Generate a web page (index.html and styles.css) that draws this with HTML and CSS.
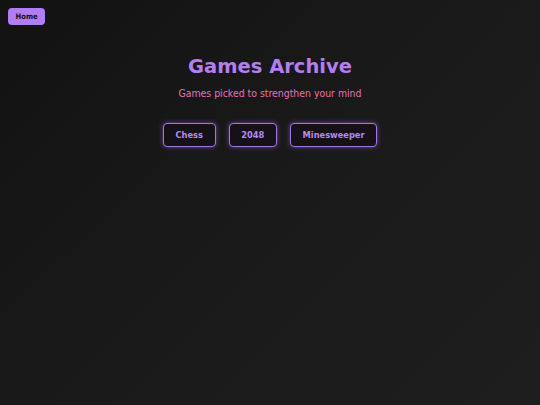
FILE: index.html
```html
<!DOCTYPE html>
<html lang="en">
<head>
<meta charset="utf-8">
<title>Games Archive</title>
<link rel="stylesheet" href="styles.css">
</head>
<body>
  <nav class="topbar">
    <a class="home-btn" href="#">Home</a>
  </nav>
  <main class="hero">
    <h1 class="title">Games Archive</h1>
    <p class="subtitle">Games picked to strengthen your mind</p>
    <div class="games">
      <a class="game-btn" href="#">Chess</a>
      <a class="game-btn" href="#">2048</a>
      <a class="game-btn" href="#">Minesweeper</a>
    </div>
  </main>
</body>
</html>
```

FILE: styles.css
```css
html, body {
  margin: 0;
  padding: 0;
  height: 100%;
}
body {
  background: linear-gradient(135deg, #121212 0%, #1a1a1a 50%, #1e1e1e 100%);
  font-family: "DejaVu Sans", Verdana, sans-serif;
  color: #ddd;
}
.topbar {
  padding: 8px 0 0 8px;
  display: flex;
}
.home-btn {
  display: inline-block;
  background: #b07ef2;
  color: #1a1022;
  font-family: "DejaVu Sans Condensed", "DejaVu Sans", sans-serif;
  font-stretch: condensed;
  font-weight: bold;
  font-size: 7.6px;
  line-height: 17px;
  height: 17px;
  padding: 0 7.5px;
  border-radius: 4px;
  text-decoration: none;
}
.hero {
  display: flex;
  flex-direction: column;
  align-items: center;
  padding-top: 30px;
}
.title {
  margin: 0;
  font-size: 19.5px;
  line-height: 24px;
  font-weight: bold;
  color: #b57ef0;
}
.subtitle {
  margin: 7px 0 0 0;
  font-family: "DejaVu Sans Condensed", "DejaVu Sans", sans-serif;
  font-stretch: condensed;
  font-size: 10.4px;
  line-height: 14px;
  color: #ee6fb4;
}
.games {
  display: flex;
  gap: 13px;
  margin-top: 23px;
}
.game-btn {
  display: inline-flex;
  align-items: center;
  justify-content: center;
  height: 21.5px;
  padding: 0 11.7px;
  border: 1.5px solid #a474e6;
  border-radius: 4px;
  background: #151117;
  color: #b58af0;
  font-family: "DejaVu Sans Condensed", "DejaVu Sans", sans-serif;
  font-stretch: condensed;
  font-weight: bold;
  font-size: 9.2px;
  text-decoration: none;
  box-shadow: 0 0 5px rgba(168, 108, 240, 0.55);
}
```
